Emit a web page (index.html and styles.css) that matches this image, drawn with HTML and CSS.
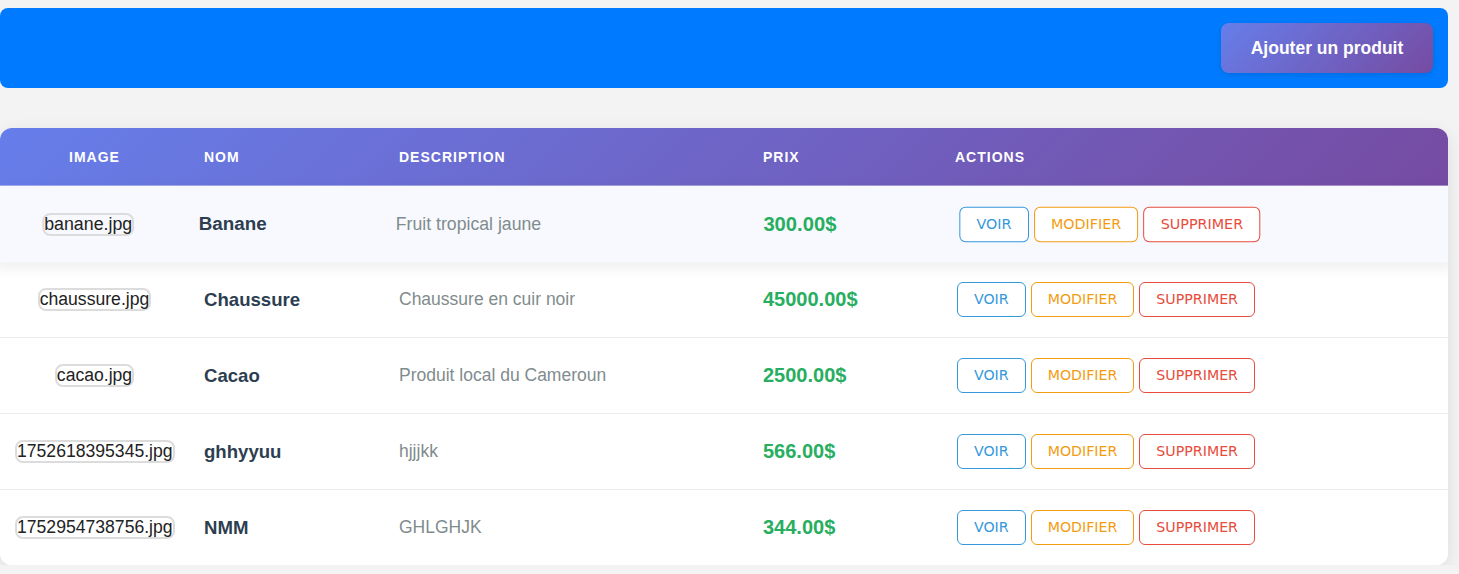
FILE: index.html
```html
<!DOCTYPE html>
<html lang="fr">
<head>
<meta charset="utf-8">
<title>Produits</title>
<link rel="stylesheet" href="styles.css">
</head>
<body>
<div class="page">
  <header class="topbar">
    <button class="add-btn">Ajouter un produit</button>
  </header>

  <section class="table">
    <div class="row head">
      <div class="cell c-img">Image</div>
      <div class="cell">Nom</div>
      <div class="cell">Description</div>
      <div class="cell">Prix</div>
      <div class="cell">Actions</div>
    </div>

    <div class="row item hovered">
      <div class="cell c-img"><span class="alt">banane.jpg</span></div>
      <div class="cell name">Banane</div>
      <div class="cell desc">Fruit tropical jaune</div>
      <div class="cell price">300.00$</div>
      <div class="cell actions"><button class="btn voir">VOIR</button><button class="btn mod">MODIFIER</button><button class="btn sup">SUPPRIMER</button></div>
    </div>

    <div class="row item">
      <div class="cell c-img"><span class="alt">chaussure.jpg</span></div>
      <div class="cell name">Chaussure</div>
      <div class="cell desc">Chaussure en cuir noir</div>
      <div class="cell price">45000.00$</div>
      <div class="cell actions"><button class="btn voir">VOIR</button><button class="btn mod">MODIFIER</button><button class="btn sup">SUPPRIMER</button></div>
    </div>

    <div class="row item">
      <div class="cell c-img"><span class="alt">cacao.jpg</span></div>
      <div class="cell name">Cacao</div>
      <div class="cell desc">Produit local du Cameroun</div>
      <div class="cell price">2500.00$</div>
      <div class="cell actions"><button class="btn voir">VOIR</button><button class="btn mod">MODIFIER</button><button class="btn sup">SUPPRIMER</button></div>
    </div>

    <div class="row item">
      <div class="cell c-img"><span class="alt">1752618395345.jpg</span></div>
      <div class="cell name">ghhyyuu</div>
      <div class="cell desc">hjjjkk</div>
      <div class="cell price">566.00$</div>
      <div class="cell actions"><button class="btn voir">VOIR</button><button class="btn mod">MODIFIER</button><button class="btn sup">SUPPRIMER</button></div>
    </div>

    <div class="row item last">
      <div class="cell c-img"><span class="alt">1752954738756.jpg</span></div>
      <div class="cell name">NMM</div>
      <div class="cell desc">GHLGHJK</div>
      <div class="cell price">344.00$</div>
      <div class="cell actions"><button class="btn voir">VOIR</button><button class="btn mod">MODIFIER</button><button class="btn sup">SUPPRIMER</button></div>
    </div>
  </section>
</div>
</body>
</html>
```

FILE: styles.css
```css
* { box-sizing: border-box; }

html, body {
  margin: 0;
  background: #f3f3f3;
  font-family: "Liberation Sans", Arial, sans-serif;
}

.page {
  padding: 8px 11px 0 0;
}

.topbar {
  height: 80px;
  background: #007bff;
  border-radius: 8px;
  display: flex;
  align-items: center;
  justify-content: flex-end;
  padding: 0 15px;
}

.add-btn {
  height: 50px;
  width: 212px;
  border: none;
  border-radius: 8px;
  background: linear-gradient(135deg, #667eea 0%, #764ba2 100%);
  color: #fff;
  font-family: "Liberation Sans", Arial, sans-serif;
  font-weight: bold;
  font-size: 17.5px;
  box-shadow: 0 2px 6px rgba(0, 0, 0, 0.12);
  padding: 0;
}

.table {
  margin-top: 40px;
  background: #fff;
  border-radius: 12px;
  overflow: hidden;
  box-shadow: 0 5px 18px rgba(0, 0, 0, 0.09);
}

.row {
  display: grid;
  grid-template-columns: 189px 195px 364px 192px 1fr;
  align-items: center;
}

.cell {
  padding: 0 15px;
}

.head {
  height: 58px;
  background: linear-gradient(135deg, #667eea 0%, #764ba2 100%);
  color: #fff;
  font-weight: bold;
  font-size: 14px;
  letter-spacing: 1px;
  text-transform: uppercase;
}

.c-img {
  text-align: center;
}

.item {
  height: 76px;
  background: #fff;
  border-bottom: 1px solid #ececec;
}

.item.last {
  height: 75px;
  border-bottom: none;
}

.item.hovered {
  position: relative;
  z-index: 1;
  background: #f8f9fe;
  transform: scale(1.01);
  box-shadow: 0 5px 15px rgba(0, 0, 0, 0.08);
  border-bottom: none;
}

.alt {
  display: inline-block;
  border: 2px solid #dcdcdc;
  border-radius: 8px;
  font-size: 17.6px;
  line-height: 19px;
  color: #222;
}

.name {
  font-weight: bold;
  font-size: 18.6px;
  color: #2c3e50;
}

.desc {
  font-size: 17.5px;
  color: #7f8c8d;
}

.price {
  font-weight: bold;
  font-size: 20px;
  color: #27ae60;
}

.actions {
  display: flex;
  gap: 5px;
  padding-left: 17px;
}

.btn {
  height: 35px;
  padding: 0 16px;
  background: #fff;
  border: 1px solid;
  border-radius: 6px;
  font-family: "DejaVu Sans", Tahoma, sans-serif;
  font-size: 14.2px;
  line-height: 33px;
}

.voir { color: #3498db; border-color: #3498db; }
.mod  { color: #f39c12; border-color: #f39c12; }
.sup  { color: #e74c3c; border-color: #e74c3c; }
```
